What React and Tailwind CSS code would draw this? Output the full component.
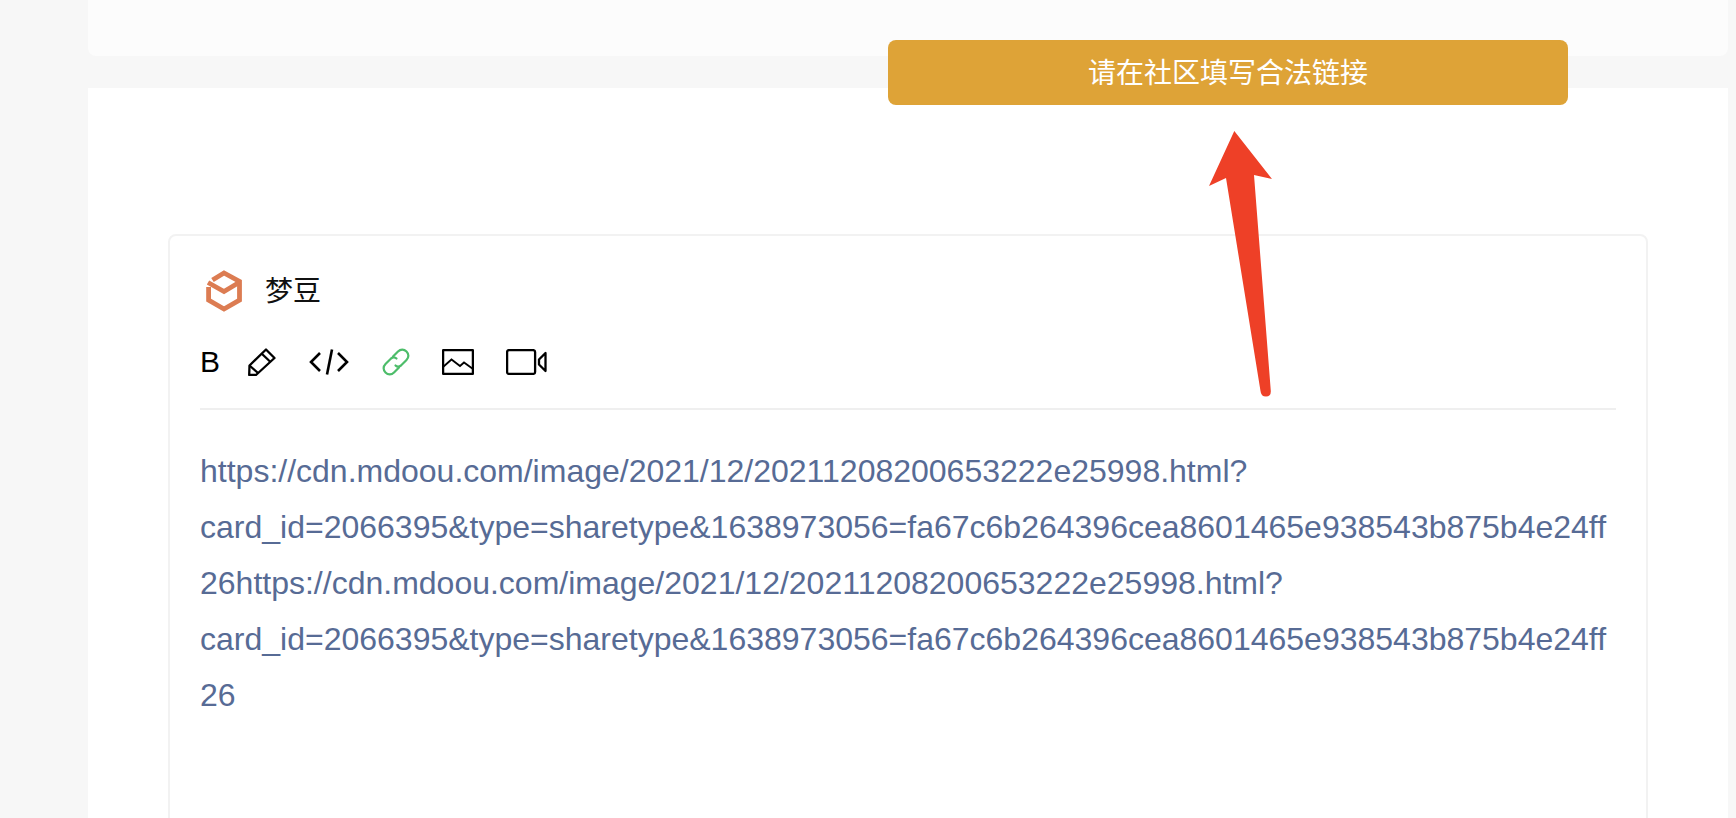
function Logo() {
  return (
    <svg width="36" height="42" viewBox="0 0 36 42" fill="none" stroke="#dc7c52" strokeWidth="4.8">
      <path d="M6.5 10 L18 3 L33.5 11.5 V30 L18 39 L2.6 30 V17" />
      <path d="M2 12.5 L18 21.5 L33 12.5" />
    </svg>
  );
}

function Pencil() {
  return (
    <svg width="28" height="28" viewBox="0 0 28 28" fill="none" stroke="#000" strokeWidth="2.3" strokeLinejoin="round">
      <path d="M18 1.5 L26.5 10 L8 27 H1.2 L1.5 17.5 Z" />
      <path d="M13.5 5.5 L22.5 14" />
      <path d="M1.5 17.5 L10 25" />
    </svg>
  );
}

function CodeIcon() {
  return (
    <svg width="40" height="26" viewBox="0 0 40 26" fill="none" stroke="#000" strokeWidth="2.6">
      <path d="M11 4 L2 13 L11 22" />
      <path d="M23 0.5 L18 25.5" />
      <path d="M29 4 L38 13 L29 22" />
    </svg>
  );
}

function LinkIcon() {
  return (
    <svg width="28" height="28" viewBox="0 0 28 28" fill="none" stroke="#4dbd6a" strokeWidth="2.2" strokeLinecap="round">
      <path d="M11 8.5 L16 3.5 C18.5 1 22 1 24.5 3.5 C27 6 27 9.5 24.5 12 L19 17.5 C17 19 15 19 13.5 17.5" />
      <path d="M17 19.5 L12 24.5 C9.5 27 6 27 3.5 24.5 C1 22 1 18.5 3.5 16 L9 10.5 C11 9 13 9 14.5 10.5" />
    </svg>
  );
}

function ImageIcon() {
  return (
    <svg width="32" height="26" viewBox="0 0 32 26" fill="none" stroke="#000" strokeWidth="2.3">
      <rect x="1.1" y="1.1" width="29.8" height="23.8" rx="0.5" />
      <path d="M1 18 L9.5 10.5 L18 17 L22 13.5 L31 20" strokeWidth="1.8" />
    </svg>
  );
}

function VideoIcon() {
  return (
    <svg width="41" height="26" viewBox="0 0 41 26" fill="none" stroke="#000" strokeWidth="2.3" strokeLinejoin="round">
      <rect x="1.1" y="1.1" width="28" height="23.8" rx="2" />
      <path d="M39.5 4 V22 L33 15.5 V10.5 Z" />
    </svg>
  );
}

export default function App() {
  const url = "https://cdn.mdoou.com/image/2021/12/20211208200653222e25998.html?card_id=2066395&type=sharetype&1638973056=fa67c6b264396cea8601465e938543b875b4e24ff26";

  return (
    <div className="h-screen overflow-hidden bg-[#f7f7f7] pl-[88px] pr-2 flex flex-col font-['Liberation_Sans',sans-serif]">
      <div className="h-14 shrink-0 rounded-b-lg bg-[#fcfcfc]"></div>

      <div className="mt-8 flex-1 bg-white px-20 pt-[146px]">
        <div className="h-[700px] rounded-lg border-2 border-[#f2f2f2] px-[30px]">
          <div className="flex items-center pt-[34px]">
            <span className="ml-1.5"><Logo /></span>
            <span className="ml-[23px] -translate-y-0.5 text-[28px] text-[#111] font-['Noto_Sans_CJK_SC',sans-serif]">梦豆</span>
          </div>

          <div className="mt-[31px] flex h-[38px] items-center">
            <span className="w-[48px] text-[30px] leading-none text-black">B</span>
            <Pencil />
            <span className="ml-[33px]"><CodeIcon /></span>
            <span className="ml-[33px]"><LinkIcon /></span>
            <span className="ml-[32px]"><ImageIcon /></span>
            <span className="ml-[32px]"><VideoIcon /></span>
          </div>

          <div className="mt-[27px] border-t-2 border-[#efefef] pt-[33px] text-[32px] leading-[56px] text-[#576b95] break-words">
            {url}{url}
          </div>
        </div>
      </div>

      {/* toast */}
      <div className="absolute left-[888px] top-10 flex h-[65px] w-[680px] items-center justify-center rounded-lg bg-[#dea337] pb-1 text-[28px] text-white font-['Noto_Sans_CJK_SC',sans-serif]">
        请在社区填写合法链接
      </div>

      {/* red arrow drawn over the screenshot */}
      <svg className="absolute left-[1200px] top-[125px]" width="80" height="280" viewBox="1200 125 80 280">
        <path d="M1234.3 131 L1272 179 L1254 175 L1270.8 391 Q1271 396.5 1266 396.5 Q1261 396.5 1260.5 391 L1226 178 L1209 186 Z" fill="#ee4027" />
      </svg>
    </div>
  );
}
